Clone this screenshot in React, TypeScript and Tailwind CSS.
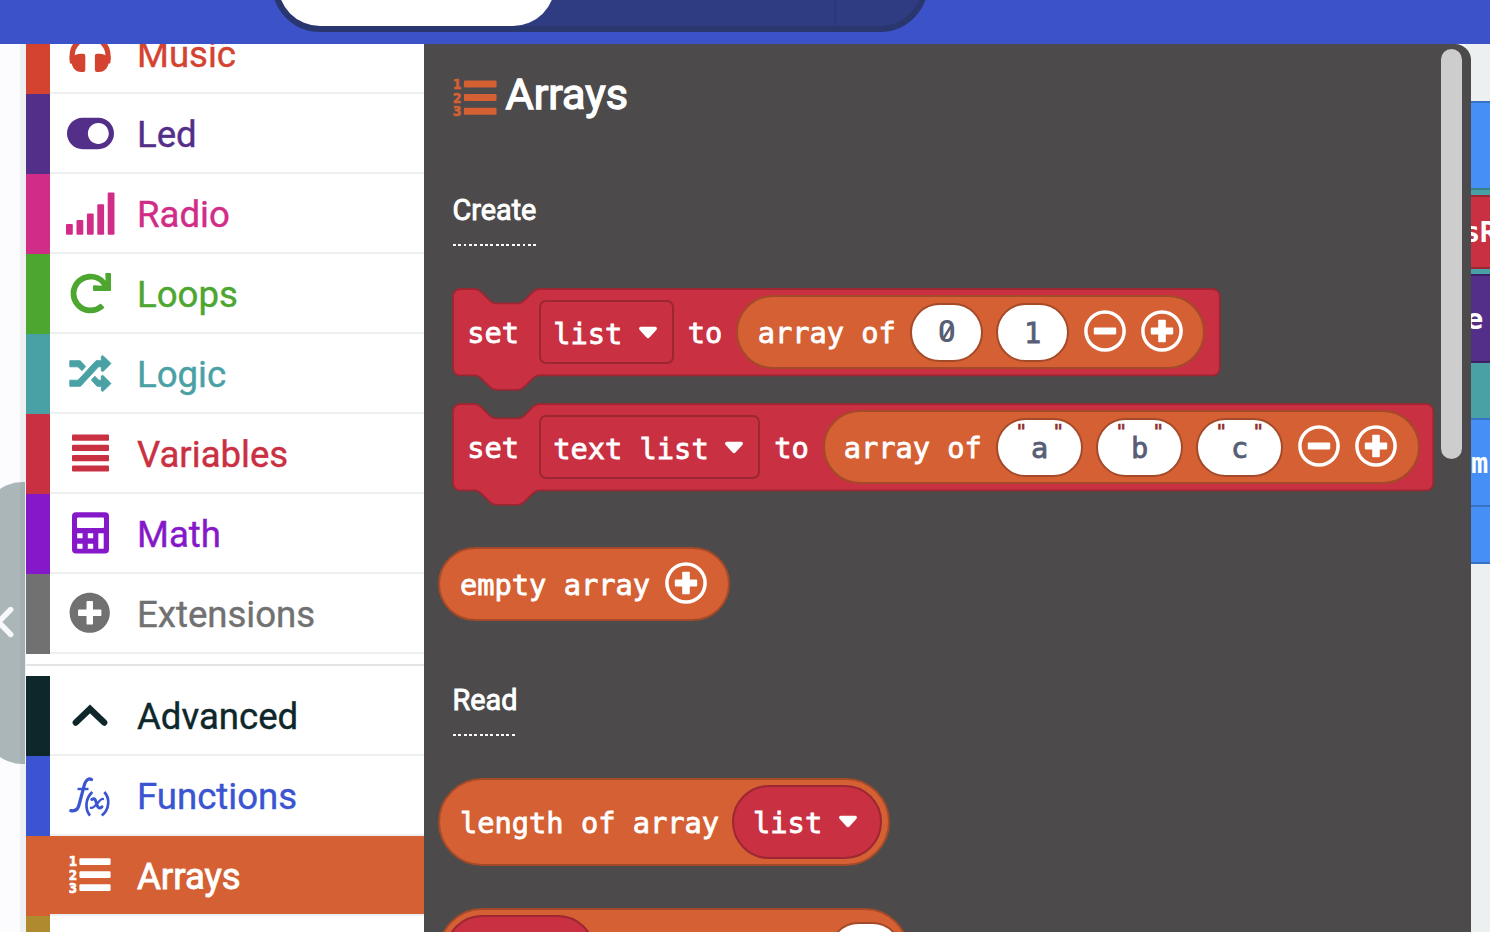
import React from "react";
import { FaToggleOn, FaRedo, FaPlusCircle } from "react-icons/fa";

function ListIcon({ className }: { className: string }) {
  return (
    <svg viewBox="0 0 42 38" className={`overflow-visible ${className}`} fill="currentColor">
      <rect x="10.4" y="2.3" width="31.2" height="6.6" rx="1.2" />
      <rect x="10.4" y="15.300" width="31.2" height="6.6" rx="1.2" />
      <rect x="10.4" y="28.3" width="31.2" height="6.6" rx="1.2" />
      <g fontFamily="DejaVu Sans" fontWeight="700" fontSize="13.4" stroke="currentColor" strokeWidth="0.6">
        <text x="-0.3" y="10.4" textLength="8.4" lengthAdjust="spacingAndGlyphs">1</text>
        <text x="-0.3" y="23.500" textLength="8.4" lengthAdjust="spacingAndGlyphs">2</text>
        <text x="-0.3" y="36.500" textLength="8.4" lengthAdjust="spacingAndGlyphs">3</text>
      </g>
    </svg>
  );
}

function HeadphonesIcon() {
  return (
    <svg viewBox="0 0 42 42" className="-mt-[2px] h-[42px] w-[42px]">
      <path d="M3.200 29V24.500a17.900 17.900 0 0 1 35.800 0V29" fill="none" stroke="currentColor" strokeWidth="5.200" />
      <path
        fill="currentColor"
        d="M16.300 24.700a2 2 0 0 0-2-2H12C8 22.700 5 24 3 26.500L0.700 24.500V31c0 1 0.500 1.500 2 1.800C4 38 7.500 41 12 41h2.300a2 2 0 0 0 2-2ZM25.900 24.700a2 2 0 0 1 2-2h2.300c4 0 7 1.300 9 3.800L41.500 24.500V31c0 1-0.500 1.500-2 1.800C38.200 38 34.700 41 30.200 41h-2.300a2 2 0 0 1-2-2Z"
      />
    </svg>
  );
}

function SignalIcon() {
  return (
    <svg viewBox="0 0 50 43" className="h-[43px] w-[50px]" fill="currentColor">
      <rect x="1" y="32" width="6.800" height="10.700" rx="1" />
      <rect x="11.500" y="28" width="6.800" height="14.700" rx="1" />
      <rect x="21.900" y="21.500" width="6.800" height="21.200" rx="1" />
      <rect x="32.300" y="12.300" width="6.800" height="30.400" rx="1" />
      <rect x="42.700" y="0.500" width="6.800" height="42.200" rx="1" />
    </svg>
  );
}

function ShuffleIcon() {
  return (
    <svg viewBox="0 0 43 37" className="h-[37px] w-[43px]">
      <path
        fill="currentColor"
        stroke="currentColor"
        strokeWidth="0.900"
        strokeLinejoin="round"
        d="M0.800 5.700H11.300L16.600 11.600L13 15.700L9 11.800H0.800ZM0.800 25.200H9L27 5.700H32.300V1.500Q33 0 34.500 1.200L41.600 8Q42.200 8.500 41.600 9L34.500 16Q33 17 32.300 15.700V11.800H29.500L11.500 31.300H0.800ZM22.400 25L25.800 21.200L29.800 25.200H32.300V21Q33 19.800 34.500 21L41.600 28Q42.200 28.500 41.600 29L34.500 35.800Q33 37 32.300 35.500V31.300H28Z"
      />
    </svg>
  );
}

function BarsIcon() {
  return (
    <svg viewBox="0 0 37 38" className="h-[38px] w-[37px]" fill="currentColor">
      <rect y="0.500" width="37" height="6.200" rx="1" />
      <rect y="10.800" width="37" height="6.200" rx="1" />
      <rect y="21.100" width="37" height="6.200" rx="1" />
      <rect y="31.400" width="37" height="6.200" rx="1" />
    </svg>
  );
}

function ChevronUpIcon() {
  return (
    <svg viewBox="0 0 36 24" className="h-[24px] w-[36px]" fill="none">
      <path d="M3.800 19.500L18 6L32.200 19.500" stroke="currentColor" strokeWidth="6.400" strokeLinecap="round" />
    </svg>
  );
}

function CalculatorIcon() {
  return (
    <svg viewBox="0 0 37 42" className="h-[42px] w-[37px]">
      <path
        fill="currentColor"
        fillRule="evenodd"
        d="M4 0.3H33a4 4 0 0 1 4 4V37.6a4 4 0 0 1-4 4H4a4 4 0 0 1-4-4V4.300a4 4 0 0 1 4-4ZM6 5.600a1 1 0 0 0-1 1V15a1 1 0 0 0 1 1H31a1 1 0 0 0 1-1V6.600a1 1 0 0 0-1-1ZM5.200 21.200v5h5.400v-5ZM15.800 21.200v5h5.400v-5ZM5.200 31.800v5h5.400v-5ZM15.800 31.800v5h5.400v-5ZM26.300 21.200v15.600h5.400V21.200Z"
      />
    </svg>
  );
}

function FunctionIcon() {
  return (
    <svg viewBox="0 0 42 44" className="mt-[3px] h-[44px] w-[42px]" stroke="currentColor" fill="none">
      <path
        d="M22.500 4.600C20 3 17 4.500 15.600 9L10 30C8.800 34.500 6 36.500 1.800 35.600"
        strokeWidth="3.200"
        strokeLinecap="round"
      />
      <path d="M8.500 14H19.500" strokeWidth="2.400" />
      <path d="M23.300 17C15.800 24 16 34.500 21 40.600M35.300 17C41.300 23.500 40.500 34 32.800 40.600" strokeWidth="2.700" />
      <path
        d="M22.800 24.500C25.800 22.500 26.500 24.500 27.500 28.500C28.500 32.500 30 34.300 33 31.800"
        strokeWidth="3"
        strokeLinecap="round"
      />
      <path d="M34 24C31 22.500 25.500 34.500 22 32.800" strokeWidth="2.400" strokeLinecap="round" />
    </svg>
  );
}

type Category = { label: string; strip: string; text: string; icon: React.ReactNode; active?: boolean };

const basic: Category[] = [
  { label: "Music", strip: "bg-[#d44330]", text: "text-[#d44330]", icon: <HeadphonesIcon /> },
  { label: "Led", strip: "bg-[#542f89]", text: "text-[#542f89]", icon: <FaToggleOn className="size-[47px]" /> },
  { label: "Radio", strip: "bg-[#d12d88]", text: "text-[#d12d88]", icon: <SignalIcon /> },
  { label: "Loops", strip: "bg-[#4ca630]", text: "text-[#4ca630]", icon: <FaRedo className="size-[41px]" /> },
  { label: "Logic", strip: "bg-[#4aa1a5]", text: "text-[#4aa1a5]", icon: <ShuffleIcon /> },
  { label: "Variables", strip: "bg-[#c93042]", text: "text-[#c93042]", icon: <BarsIcon /> },
  { label: "Math", strip: "bg-[#8519c9]", text: "text-[#8519c9]", icon: <CalculatorIcon /> },
  {
    label: "Extensions",
    strip: "bg-[#717171]",
    text: "text-[#717171]",
    icon: <FaPlusCircle className="size-[41.500px]" />,
  },
];

const advanced: Category[] = [
  { label: "Advanced", strip: "bg-[#0e272b]", text: "text-[#0e272b]", icon: <ChevronUpIcon /> },
  { label: "Functions", strip: "bg-[#3b54d1]", text: "text-[#3b54d1]", icon: <FunctionIcon /> },
  {
    label: "Arrays",
    strip: "bg-[#d46034]",
    text: "bg-[#d46034] text-white",
    icon: <ListIcon className="h-[38px] w-[42px]" />,
    active: true,
  },
];

function CategoryRow({ c }: { c: Category }) {
  return (
    <div className="flex h-20 w-full shrink-0">
      <div className={`w-6 shrink-0 ${c.strip}`} />
      <div className={`flex flex-1 items-center border-b-2 border-[#ecf0f1] ${c.text}`}>
        <div className="flex w-[80.4px] shrink-0 justify-center">{c.icon}</div>
        <span
          className={`pl-[6.600px] pt-[5px] text-[36.600px] leading-none ${c.active ? "[-webkit-text-stroke:0.9px_white]" : "[-webkit-text-stroke:0.4px_currentColor]"}`}
        >
          {c.label}
        </span>
      </div>
    </div>
  );
}

const mono =
  "pt-[2px] font-['DejaVu_Sans_Mono',monospace] text-[28.7px] leading-[34px] whitespace-pre [-webkit-text-stroke:0.8px_currentColor]";

function T({ children, className = "" }: { children: string; className?: string }) {
  return <span className={`${mono} shrink-0 ${className}`}>{children}</span>;
}

function Arrow({ className = "" }: { className?: string }) {
  return (
    <svg viewBox="0 0 20 13" className={`h-[13px] w-[20px] shrink-0 ${className}`}>
      <path
        d="M3 0.700H17C19 0.700 19.500 2.700 18.300 4L11.700 11.300Q10 13 8.300 11.300L1.700 4C0.500 2.700 1 0.700 3 0.700Z"
        fill="white"
      />
    </svg>
  );
}

function RoundButton({ plus = false, className = "" }: { plus?: boolean; className?: string }) {
  return (
    <svg viewBox="0 0 42 42" className={`-mt-[2px] size-[42px] shrink-0 ${className}`}>
      <circle cx="21" cy="21" r="19.1" fill="none" stroke="white" strokeWidth="3.500" />
      <rect x="9.800" y="17.600" width="22.400" height="6.800" rx="0.800" fill="white" />
      {plus && <rect x="17.200" y="9.800" width="7.600" height="22.400" rx="0.800" fill="white" />}
    </svg>
  );
}

function SlashedZero() {
  return (
    <span className="relative font-['Roboto',sans-serif] text-[31px] font-medium leading-[34px]">
      0
      <svg viewBox="0 0 18 34" className="absolute left-0 top-0 h-[34px] w-[18px]" fill="none">
        <path d="M12.800 11.500L4.800 24.500" stroke="currentColor" strokeWidth="2.400" />
      </svg>
    </span>
  );
}

function NumberInput({ value, className }: { value: string; className: string }) {
  return (
    <div
      className={`flex h-[59px] w-[73px] shrink-0 items-center justify-center rounded-full border-2 border-[#a54a29] bg-white text-[#575e75] ${className}`}
    >
      {value === "0" ? <SlashedZero /> : <T>{value}</T>}
    </div>
  );
}

function TextInput({ value, className }: { value: string; className: string }) {
  return (
    <div
      className={`relative flex h-[59px] w-[87px] shrink-0 items-center justify-center rounded-full border-2 border-[#a54a29] bg-white text-[#575e75] ${className}`}
    >
      <T>{value}</T>
      <span className="absolute left-[17px] top-[1px] flex w-[49px] justify-between font-['DejaVu_Sans_Mono',monospace] text-[20px] leading-[20px] text-[#8f2f2b] [-webkit-text-stroke:0.6px_#8f2f2b]">
        <span>"</span>
        <span>"</span>
      </span>
    </div>
  );
}

function StatementBlock({ units, widthClass, children }: { units: number; widthClass: string; children: React.ReactNode }) {
  const d = `M0 4A4 4 0 0 1 4 0H12c2 0 3 1 4 2l4 4c1 1 2 2 4 2h12c2 0 3 -1 4 -2l4 -4c1 -1 2 -2 4 -2H${units - 4}a4 4 0 0 1 4 4V44a4 4 0 0 1 -4 4H48c-2 0 -3 1 -4 2l-4 4c-1 1 -2 2 -4 2h-12c-2 0 -3 -1 -4 -2l-4 -4c-1 -1 -2 -2 -4 -2H4a4 4 0 0 1 -4 -4Z`;
  return (
    <div className={`relative ml-[28.5px] flex h-[86.4px] shrink-0 items-center ${widthClass}`}>
      <svg className="absolute left-0 top-0 h-[101px] w-full overflow-visible" fill="#c93042" stroke="#9c2733">
        <path d={d} transform="translate(0 0) scale(1.800)" />
      </svg>
      <div className="relative flex w-full items-center text-white">{children}</div>
    </div>
  );
}

function FieldMenu({ label, className }: { label: string; className: string }) {
  return (
    <div
      className={`flex h-[64px] shrink-0 items-center rounded-[7px] border-2 border-[#9c2733] bg-[#c93042] pl-[12.600px] ${className}`}
    >
      <T className="mt-px">{label}</T>
      <Arrow className="ml-[15.500px]" />
    </div>
  );
}

function VariablePill({ className = "" }: { className?: string }) {
  return (
    <div
      className={`flex h-[74px] w-[150px] shrink-0 items-center rounded-full border-2 border-[#9c2733] bg-[#c93042] pl-[19px] ${className}`}
    >
      <T>list</T>
      <Arrow className="ml-[16px]" />
    </div>
  );
}

const orangePill = "flex shrink-0 items-center rounded-full border-2 border-[#a54a29] bg-[#d46034] text-white";

function GroupLabel({ children, className }: { children: string; className: string }) {
  return (
    <div className={`ml-[28.5px] flex h-[52px] w-fit shrink-0 flex-col justify-between ${className}`}>
      <span className="text-[28.8px] leading-8 text-white [-webkit-text-stroke:0.9px_white]">{children}</span>
      <div className="h-[2px] w-full bg-[repeating-linear-gradient(90deg,#ffffff_0_2.8px,transparent_2.8px_5.35px)]" />
    </div>
  );
}

function Flyout() {
  return (
    <div className="flex w-[1047px] shrink-0 overflow-hidden rounded-tr-[16px] bg-[#4c4a4a]">
      <div className="flex w-[1017px] shrink-0 flex-col">
        <div className="flex h-[101px] shrink-0 items-center pl-[28.500px]">
          <ListIcon className="mt-[6px] h-[40px] w-[44px] text-[#d46034]" />
          <h1 className="pl-[9px] pt-px text-[43.2px] font-normal leading-none text-white [-webkit-text-stroke:1.4px_white]">
            Arrays
          </h1>
        </div>
        <GroupLabel className="mt-[49px]">Create</GroupLabel>

        <div className="mt-[43px] flex shrink-0 flex-col gap-[28.8px]">
          <StatementBlock units={426} widthClass="w-[766.8px]">
            <T className="ml-[14.8px]">set</T>
            <FieldMenu label="list" className="ml-[19.500px] w-[135px]" />
            <T className="ml-[14px]">to</T>
            <div className={`${orangePill} ml-[14px] h-[74px] w-[469px]`}>
              <T className="ml-[19.500px]">array of</T>
              <NumberInput value="0" className="ml-[14.4px]" />
              <NumberInput value="1" className="ml-[13px]" />
              <RoundButton className="ml-[14.500px]" />
              <RoundButton plus className="ml-[15.6px]" />
            </div>
          </StatementBlock>
          <StatementBlock units={544.6} widthClass="w-[980.5px]">
            <T className="ml-[14.8px]">set</T>
            <FieldMenu label="text list" className="ml-[19.500px] w-[221.500px]" />
            <T className="ml-[14px]">to</T>
            <div className={`${orangePill} ml-[14px] h-[74px] w-[597px]`}>
              <T className="ml-[19px]">array of</T>
              <TextInput value="a" className="ml-[14.4px]" />
              <TextInput value="b" className="ml-[13px]" />
              <TextInput value="c" className="ml-[13px]" />
              <RoundButton className="ml-[14.500px]" />
              <RoundButton plus className="ml-[15.6px]" />
            </div>
          </StatementBlock>
        </div>

        <div className={`${orangePill} ml-[14px] mt-[56.4px] h-[74px] w-[292px]`}>
          <T className="ml-[20px]">empty array</T>
          <RoundButton plus className="ml-[15px]" />
        </div>

        <GroupLabel className="mt-[63px]">Read</GroupLabel>

        <div className="mt-[41.700px] flex shrink-0 flex-col gap-[42px]">
          <div className={`${orangePill} ml-[14px] h-[88px] w-[452px]`}>
            <T className="ml-[20px]">length of array</T>
            <VariablePill className="ml-[13px]" />
          </div>
          <div className={`${orangePill} ml-[14px] h-[88px] w-[471px]`}>
            <VariablePill className="ml-[4.500px]" />
            <T className="ml-[14px]">get value at</T>
            <NumberInput value="0" className="ml-[13.500px]" />
          </div>
        </div>
      </div>
      <div className="mt-[5px] h-[410px] w-[20.500px] shrink-0 rounded-full bg-[#cdcdcd]" />
    </div>
  );
}

function Slice({ className, children }: { className: string; children?: React.ReactNode }) {
  return (
    <div
      className={`flex shrink-0 items-center border-t-2 font-['DejaVu_Sans_Mono',monospace] text-[28.7px] font-bold text-white ${className}`}
    >
      {children}
    </div>
  );
}

function Workspace() {
  return (
    <div className="flex w-[19px] shrink-0 flex-col overflow-hidden bg-[#ecf0f1] pt-[57px]">
      <Slice className="h-[87px] border-[#3773c4] bg-[#468ff7]" />
      <Slice className="h-[7px] border-[#3b7f86] bg-[#4aa1a5]" />
      <Slice className="h-[72px] border-[#9c2733] bg-[#c93042]">
        <span className="-ml-[8px] pt-[2px] tracking-[-0.500px]">sR</span>
      </Slice>
      <Slice className="h-[7px] border-[#9c2733] bg-[#4aa1a5]" />
      <Slice className="h-[87px] border-[#3c2264] bg-[#542f89]">
        <span className="-ml-[5px] pt-[3px]">e</span>
      </Slice>
      <Slice className="h-[57px] border-[#3c2264] bg-[#4aa1a5]" />
      <Slice className="h-[87px] border-[#3773c4] bg-[#468ff7]">
        <span className="pt-[3px]">m</span>
      </Slice>
      <Slice className="h-[59px] border-b-2 border-[#3773c4] bg-[#468ff7]" />
    </div>
  );
}

export default function App() {
  return (
    <div className="flex h-[932px] w-[1490px] flex-col overflow-hidden bg-white font-['Roboto',sans-serif]">
      <header className="flex h-11 shrink-0 items-start overflow-hidden bg-[#3b52c9]">
        <div className="-mt-[68px] ml-[272px] flex h-[100px] w-[656px] rounded-[48px] border-[6px] border-[#2a366e] bg-[#2f3c82]">
          <div className="h-full w-[277px] rounded-[42px] bg-white" />
          <div className="h-full w-[281px] border-r-2 border-[#2b3879]" />
        </div>
      </header>
      <div className="flex min-h-0 flex-1 bg-[linear-gradient(90deg,#ffffff_0_1465px,#ecf0f1_1465px)] bg-[length:1490px_100%] bg-no-repeat">
        <div className="flex w-[26px] shrink-0 flex-col bg-[linear-gradient(90deg,#fcfcff_0_20px,#eef0f2_20px)] pt-[438px]">
          <div className="flex h-[282px] w-[25px] items-center overflow-hidden bg-[linear-gradient(90deg,#aab6b7_0_20px,#a5b0b2_20px)] [clip-path:inset(0_0_0_-16px_round_38px_0_0_38px)]">
            <svg viewBox="0 0 14 34" className="-mt-[2px] h-[34px] w-[14px]" fill="none">
              <path d="M10.700 4.500L-1.500 17L10.700 29.500" stroke="#f7f8fb" strokeWidth="5.400" strokeLinecap="round" />
            </svg>
          </div>
        </div>
        <nav className="flex w-[398px] shrink-0 flex-col overflow-hidden bg-white">
          <div className="-mt-[30px] flex shrink-0 flex-col">
            {basic.map((c) => (
              <CategoryRow key={c.label} c={c} />
            ))}
          </div>
          <div className="my-[10px] h-[2px] shrink-0 bg-[#e4e4e6]" />
          {advanced.map((c) => (
            <CategoryRow key={c.label} c={c} />
          ))}
          <div className="h-20 w-6 shrink-0 bg-[#b08a2e]" />
        </nav>
        <Flyout />
        <Workspace />
      </div>
    </div>
  );
}
